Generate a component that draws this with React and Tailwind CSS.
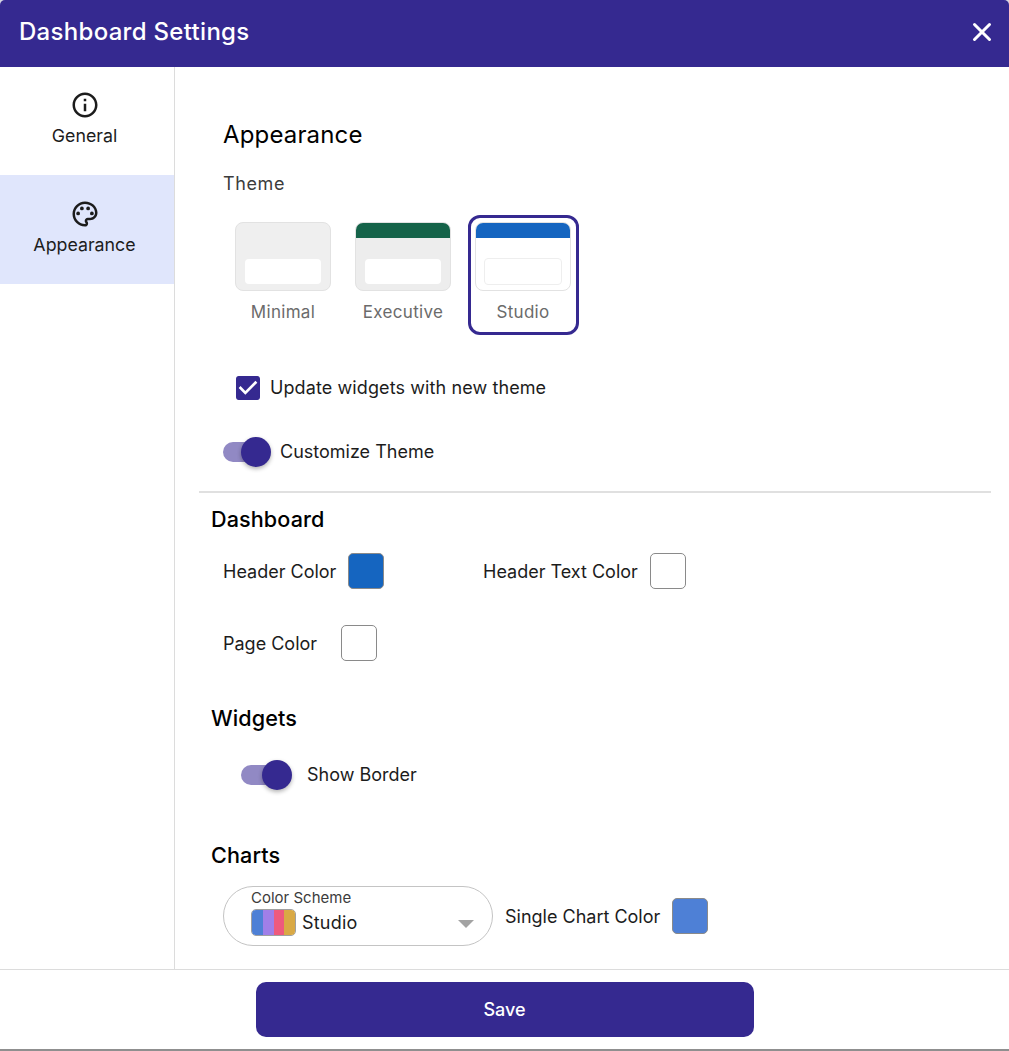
import { X } from "lucide-react";

const Toggle = ({ className = "" }) => (
  <div className={`relative w-[48px] h-[30px] flex items-center ${className}`}>
    <div className="w-[36px] h-[20px] rounded-full bg-[#9189c4]" />
    <div className="absolute right-0 top-0 w-[30px] h-[30px] rounded-full bg-[#352990] shadow-[0_2px_4px_rgba(0,0,0,0.3)]" />
  </div>
);

const Swatch = ({ className = "" }) => (
  <div className={`w-[36px] h-[36px] rounded-[5px] border border-[#8a8a8a] ${className}`} />
);

const ThemeCard = ({
  label,
  header,
  page = "bg-[#efefef]",
  inner = "mt-[21px] mx-[9px] h-[25px]",
  selected,
}) => (
  <div
    className={`w-[111px] h-[120px] rounded-[12px] pl-[4px] pt-[4px] border-[3px] ${
      selected ? "border-[#352990]" : "border-transparent"
    }`}
  >
    <div className="w-[96px] flex flex-col items-center">
      <div className={`w-[96px] h-[69px] rounded-[8px] border border-[#e2e2e2] overflow-hidden flex flex-col ${page}`}>
        <div className={`h-[15px] shrink-0 ${header || ""}`} />
        <div className={`rounded-[4px] bg-white ${inner}`} />
      </div>
      <span className="mt-[11px] whitespace-nowrap text-[17px] leading-[20px] tracking-[0.3px] text-[#6b6b6b]">{label}</span>
    </div>
  </div>
);

const App = () => {
  return (
    <div className="w-[1009px] h-[1051px] flex flex-col bg-[#d5d5e2] font-['Inter',sans-serif] text-[#1c1c1c] overflow-hidden">
      {/* Header */}
      <header className="h-[67px] shrink-0 bg-[#352990] rounded-t-[5px] flex items-center justify-between pl-[19px] pr-[12px] pb-[3px]">
        <h1 className="text-[24px] font-medium tracking-[0.3px] text-white leading-none">Dashboard Settings</h1>
        <X size={30} strokeWidth={2.4} className="text-white" />
      </header>

      <div className="flex flex-1 min-h-0 bg-white">
        {/* Sidebar */}
        <aside className="w-[175px] shrink-0 border-r border-[#dcdcdc]">
          <div className="h-[108px] flex flex-col items-center pt-[23px] pr-[5px]">
            <svg viewBox="0 0 24 24" className="w-[30px] h-[30px] fill-[#1c1c1c]">
              <path d="M11 7h2v2h-2zm0 4h2v6h-2zm1-9C6.48 2 2 6.48 2 12s4.48 10 10 10 10-4.48 10-10S17.52 2 12 2zm0 18c-4.41 0-8-3.59-8-8s3.59-8 8-8 8 3.59 8 8-3.59 8-8 8z" />
            </svg>
            <span className="mt-[4px] text-[17.8px] leading-[24px]">General</span>
          </div>
          <div className="h-[109px] flex flex-col items-center pt-[24px] pr-[5px] bg-[#e0e6fc]">
            <svg viewBox="0 0 24 24" className="w-[30px] h-[30px] fill-[#1c1c1c]">
              <path d="M12 22C6.49 22 2 17.51 2 12S6.49 2 12 2s10 4.04 10 9c0 3.31-2.69 6-6 6h-1.77c-.28 0-.5.22-.5.5 0 .12.05.23.13.33.41.47.64 1.06.64 1.67 0 1.38-1.12 2.5-2.5 2.5zm0-18c-4.41 0-8 3.59-8 8s3.59 8 8 8c.28 0 .5-.22.5-.5 0-.16-.08-.28-.14-.35-.41-.46-.63-1.05-.63-1.65 0-1.38 1.12-2.5 2.5-2.5H16c2.21 0 4-1.79 4-4 0-3.86-3.59-7-8-7z" />
              <circle cx="6.5" cy="11.5" r="1.5" />
              <circle cx="9.5" cy="7.5" r="1.5" />
              <circle cx="14.5" cy="7.5" r="1.5" />
              <circle cx="17.5" cy="11.5" r="1.5" />
            </svg>
            <span className="mt-[4px] text-[17.8px] leading-[24px]">Appearance</span>
          </div>
        </aside>

        {/* Main content */}
        <main className="flex-1 pl-[24px] pr-[18px]">
          <div className="pl-[24px] h-[426px] flex flex-col border-b-2 border-[#e0e0e0]">
            <h2 className="mt-[53px] text-[24px] leading-[30px] tracking-[0.15px] font-normal text-black">Appearance</h2>
            <div className="mt-[22px] text-[18px] leading-[24px] tracking-[0.6px] text-[#3c3c3c]">Theme</div>
            <div className="mt-[19px] ml-[5px] flex gap-[9px]">
              <ThemeCard label="Minimal" />
              <ThemeCard label="Executive" header="bg-[#156349]" page="bg-[#ededed]" />
              <ThemeCard
                label="Studio"
                header="bg-[#1565c0]"
                page="bg-white"
                inner="mt-[20px] mx-[8px] h-[27px] border border-[#eeeeee]"
                selected
              />
            </div>
            <label className="mt-[41px] ml-[13px] flex items-center gap-[10px]">
              <svg viewBox="3 3 18 18" className="w-[24px] h-[24px] fill-[#352990]">
                <path d="M19 3H5c-1.11 0-2 .9-2 2v14c0 1.1.89 2 2 2h14c1.11 0 2-.9 2-2V5c0-1.1-.89-2-2-2zm-9 14l-5-5 1.41-1.41L10 14.17l7.59-7.59L19 8l-9 9z" />
              </svg>
              <span className="text-[18px] leading-[24px] tracking-[0.1px]">Update widgets with new theme</span>
            </label>
            <div className="mt-[37px] flex items-center gap-[9px]">
              <Toggle />
              <span className="text-[18px] leading-[24px]">Customize Theme</span>
            </div>
          </div>

          <div className="pl-[12px]">
            <h3 className="mt-[13px] text-[21.6px] leading-[26px] tracking-[0.1px] font-medium text-black">Dashboard</h3>
            <div className="mt-[21px] pl-[12px] flex items-center">
              <span className="w-[125px] text-[18px]">Header Color</span>
              <Swatch className="bg-[#1565c0]" />
              <span className="ml-[99px] w-[167px] text-[18px]">Header Text Color</span>
              <Swatch className="bg-white" />
            </div>
            <div className="mt-[36px] pl-[12px] flex items-center">
              <span className="w-[118px] text-[18px]">Page Color</span>
              <Swatch className="bg-white" />
            </div>

            <h3 className="mt-[44px] text-[21.6px] leading-[26px] tracking-[0.1px] font-medium text-black">Widgets</h3>
            <div className="mt-[29px] ml-[30px] flex items-center gap-[15px]">
              <Toggle className="w-[51px]" />
              <span className="text-[18px] leading-[24px]">Show Border</span>
            </div>

            <h3 className="mt-[52px] text-[21.6px] leading-[26px] tracking-[0.1px] font-medium text-black">Charts</h3>
            <div className="mt-[18px] pl-[12px] flex items-center">
              <div className="relative w-[270px] h-[60px] rounded-full border border-[#c4c4c4] pl-[27px] pt-[2px]">
                <div className="text-[15px] leading-[18px] text-[#3c3c3c]">Color Scheme</div>
                <div className="mt-[2px] flex items-center gap-[6px]">
                  <div className="w-[45px] h-[27px] rounded-[5px] overflow-hidden flex border border-[#a0a0a0]">
                    <div className="flex-1 bg-[#4e80d6]" />
                    <div className="flex-1 bg-[#a07fe8]" />
                    <div className="flex-1 bg-[#ee5a7d]" />
                    <div className="flex-1 bg-[#d9a945]" />
                  </div>
                  <span className="text-[18px] leading-[24px] tracking-[0.2px]">Studio</span>
                </div>
                <div className="absolute right-[18px] top-[33px] w-0 h-0 border-x-[8px] border-x-transparent border-t-[8px] border-t-[#a3a3a3]" />
              </div>
              <span className="ml-[12px] w-[167px] text-[18px]">Single Chart Color</span>
              <Swatch className="bg-[#4e80d6] border-[#7d9bd0]" />
            </div>
          </div>
        </main>
      </div>

      {/* Footer */}
      <footer className="h-[82px] shrink-0 bg-white border-t border-[#dcdcdc] border-b-2 border-b-[#8f8f8f] pt-[12px] flex justify-center">
        <button className="w-[498px] h-[55px] pb-[1px] rounded-[10px] bg-[#352990] text-white text-[18px] font-medium">Save</button>
      </footer>
    </div>
  );
};

export default App;
